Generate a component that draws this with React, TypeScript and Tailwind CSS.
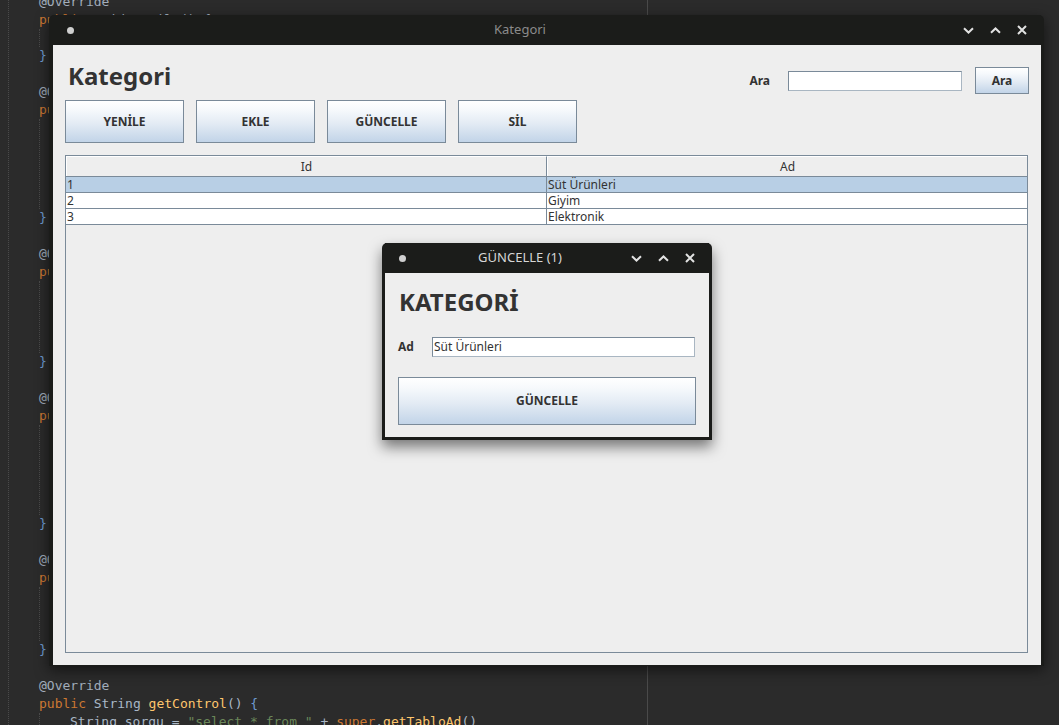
import React from 'react';

const codeLines: React.ReactNode[] = [];
const ann = (k: number) => (
  <span key={k} className="text-[#a2adbb]">@Override</span>
);
const pub = (k: number, rest: string) => (
  <span key={k}>
    <span className="text-[#cc7832]">public</span>
    <span className="text-[#a9b7c6]"> {rest}</span>
  </span>
);
const close = (k: number) => (
  <span key={k} className="text-[#6f9bd1]">{'}'}</span>
);

for (let i = 0; i < 42; i++) codeLines.push(null);
codeLines[0] = ann(0);
codeLines[1] = pub(1, 'void yenile() {');
codeLines[3] = close(3);
codeLines[5] = ann(5);
codeLines[6] = pub(6, 'void ekle() {');
codeLines[12] = close(12);
codeLines[14] = ann(14);
codeLines[15] = pub(15, 'void guncelle() {');
codeLines[20] = close(20);
codeLines[22] = ann(22);
codeLines[23] = pub(23, 'void sil() {');
codeLines[29] = close(29);
codeLines[31] = ann(31);
codeLines[32] = pub(32, 'void ara() {');
codeLines[36] = close(36);
codeLines[38] = ann(38);
codeLines[39] = (
  <span key={39}>
    <span className="text-[#cc7832]">public </span>
    <span className="text-[#a9b7c6]">String </span>
    <span className="text-[#ffc66d]">getControl</span>
    <span className="text-[#a9b7c6]">() </span>
    <span className="text-[#6f9bd1]">{'{'}</span>
  </span>
);
codeLines[40] = (
  <span key={40} className="pl-[31px]">
    <span className="text-[#a9b7c6]">String sorgu = </span>
    <span className="text-[#6a8759]">"select * from "</span>
    <span className="text-[#a9b7c6]"> + </span>
    <span className="text-[#cc7832]">super</span>
    <span className="text-[#a9b7c6]">.</span>
    <span className="text-[#ffc66d]">getTabloAd</span>
    <span className="text-[#a9b7c6]">()</span>
  </span>
);

// indent guides between "public" line and closing brace
const guides: [number, number][] = [
  [1, 3],
  [6, 12],
  [15, 20],
  [23, 29],
  [32, 36],
  [39, 42],
];

function ChevronDown() {
  return (
    <svg width="11" height="7" viewBox="0 0 11 7" fill="none">
      <path d="M1 1.2 L5.5 5.5 L10 1.2" stroke="currentColor" strokeWidth="2" />
    </svg>
  );
}
function ChevronUp() {
  return (
    <svg width="11" height="7" viewBox="0 0 11 7" fill="none">
      <path d="M1 5.8 L5.5 1.5 L10 5.8" stroke="currentColor" strokeWidth="2" />
    </svg>
  );
}
function CloseX() {
  return (
    <svg width="10" height="10" viewBox="0 0 10 10" fill="none">
      <path d="M1 1 L9 9 M9 1 L1 9" stroke="currentColor" strokeWidth="2" />
    </svg>
  );
}

function TitleBar({ title, active }: { title: string; active?: boolean }) {
  return (
    <div className="flex h-[30px] shrink-0 items-center bg-[#1b1c1a]">
      <div className="w-[26px] shrink-0">
        <div className="ml-[14px] h-[7px] w-[7px] rounded-full bg-[#cfcfcf]" />
      </div>
      <div
        className={`flex-1 truncate text-center text-[13px] ${
          active ? 'text-[#d6d6d6]' : 'text-[#8b8b8b]'
        }`}
      >
        {title}
      </div>
      <div className="flex w-[80px] shrink-0 items-center justify-end gap-[16px] pr-[14px] text-[#e2e2e2]">
        <ChevronDown />
        <ChevronUp />
        <CloseX />
      </div>
    </div>
  );
}

const btn =
  'flex items-center justify-center border border-[#7a8a99] bg-[linear-gradient(180deg,#ffffff_0%,#f6f9fc_22%,#e3ebf4_55%,#c2d4e8_100%)] text-[12px] font-bold text-[#333333]';

const input =
  'border border-[#7a8a99] border-b-[#a9b6c2] border-r-[#a9b6c2] bg-white px-[1px] text-[12px] text-[#333333] leading-[18px]';

const rows = [
  { id: '1', ad: 'Süt Ürünleri', sel: true },
  { id: '2', ad: 'Giyim' },
  { id: '3', ad: 'Elektronik' },
];

export default function App() {
  return (
    <div className="relative h-[725px] w-[1059px] overflow-hidden bg-[#2b2b2b] [font-family:'Noto_Sans',sans-serif]">
      {/* editor behind */}
      <div className="absolute left-[8px] top-0 h-full border-l border-dotted border-[#4a4a4a]" />
      <div className="absolute left-[647px] top-0 h-full w-px bg-[#4a4a4a]" />
      {guides.map(([a, b]) => (
        <div
          key={a}
          className="absolute left-[39px] border-l border-dotted border-[#4a4a4a]"
          style={{ top: -7 + (a + 1) * 18, height: (b - a - 1) * 18 }}
        />
      ))}
      <div className="mt-[-7px] pl-[39px] text-[13px] [font-family:'DejaVu_Sans_Mono',monospace]">
        {codeLines.map((l, i) => (
          <div key={i} className="h-[18px] whitespace-pre leading-[18px]">
            {l}
          </div>
        ))}
      </div>

      {/* main window */}
      <div className="absolute left-[49px] top-[15px] flex h-[651px] w-[995px] flex-col rounded-t-[5px] bg-[#1b1c1a] px-[4px] pb-[1px] pr-[3px] shadow-[0_4px_14px_rgba(0,0,0,0.55)]">
        <TitleBar title="Kategori" />
        <div className="flex flex-1 flex-col bg-[#eeeeee] pl-[12px] pr-[12px] pt-[15px] pb-[12px]">
          <div className="flex items-start justify-between">
            <div className="ml-[3px] text-[24px] font-bold leading-[32px] text-[#333333]">Kategori</div>
            <div className="mt-[7px] flex items-center">
              <span className="text-[12px] font-bold text-[#333333]">Ara</span>
              <div className={`${input} ml-[18px] h-[20px] w-[174px]`} />
              <button className={`${btn} ml-[13px] h-[27px] w-[54px]`}>Ara</button>
            </div>
          </div>
          <div className="mt-[6px] flex gap-[12px]">
            {['YENİLE', 'EKLE', 'GÜNCELLE', 'SİL'].map((t) => (
              <button key={t} className={`${btn} h-[43px] w-[119px]`}>
                {t}
              </button>
            ))}
          </div>
          <div className="mt-[12px] mr-[1px] flex flex-1 flex-col border border-[#7a8a99] text-[12px] text-[#333333]">
            <div className="grid h-[21px] grid-cols-[481px_1fr] border-b border-[#7a8a99]">
              <div className="flex items-center justify-center border-l border-t border-r border-l-white border-t-white border-r-[#7a8a99] bg-[#eeeeee]">
                Id
              </div>
              <div className="flex items-center justify-center border-l border-t border-white bg-[#eeeeee]">
                Ad
              </div>
            </div>
            {rows.map((r) => (
              <div
                key={r.id}
                className={`grid h-[16px] grid-cols-[481px_1fr] border-b border-[#7a8a99] leading-[15px] ${
                  r.sel ? 'bg-[#b8cfe5]' : 'bg-white'
                }`}
              >
                <div className="border-r border-[#7a8a99] pl-[1px]">{r.id}</div>
                <div className="pl-[1px]">{r.ad}</div>
              </div>
            ))}
          </div>
        </div>
      </div>

      {/* dialog */}
      <div className="absolute left-[382px] top-[243px] flex h-[197px] w-[330px] flex-col rounded-t-[5px] bg-[#1b1c1a] px-[3px] pb-[3px] shadow-[0_7px_14px_rgba(0,0,0,0.5)]">
        <TitleBar title="GÜNCELLE (1)" active />
        <div className="flex flex-1 flex-col bg-[#eeeeee] px-[13px] pt-[13px]">
          <div className="ml-[1px] text-[24px] font-bold leading-[32px] text-[#333333]">KATEGORİ</div>
          <div className="mt-[19px] flex items-center">
            <span className="w-[34px] text-[12px] font-bold text-[#333333]">Ad</span>
            <div className={`${input} h-[20px] flex-1 mr-[1px]`}>Süt Ürünleri</div>
          </div>
          <button className={`${btn} mt-[20px] h-[48px] w-full`}>GÜNCELLE</button>
        </div>
      </div>
    </div>
  );
}
